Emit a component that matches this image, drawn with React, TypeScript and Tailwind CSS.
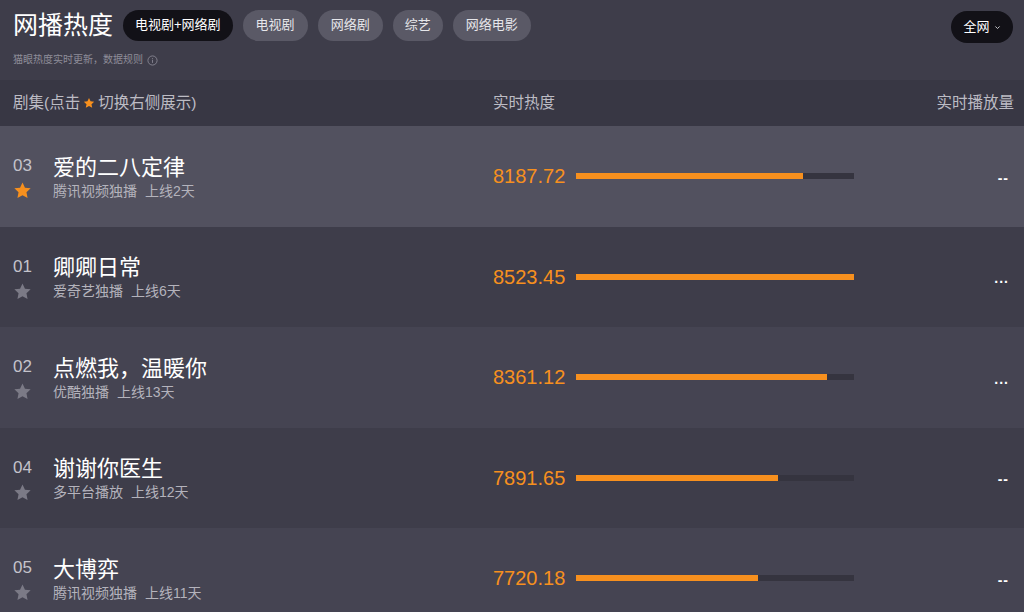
import React from "react";

const FONT = '"Liberation Sans", "Noto Sans CJK SC", sans-serif';

const rows = [
  { no: "03", title: "爱的二八定律", sub: "腾讯视频独播", days: "上线2天", heat: "8187.72", pct: 0.817, right: "--", starred: true, bg: "bg-[#52515f]" },
  { no: "01", title: "卿卿日常", sub: "爱奇艺独播", days: "上线6天", heat: "8523.45", pct: 1, right: "...", starred: false, bg: "bg-[#3e3d4a]" },
  { no: "02", title: "点燃我，温暖你", sub: "优酷独播", days: "上线13天", heat: "8361.12", pct: 0.903, right: "...", starred: false, bg: "bg-[#454452]" },
  { no: "04", title: "谢谢你医生", sub: "多平台播放", days: "上线12天", heat: "7891.65", pct: 0.727, right: "--", starred: false, bg: "bg-[#3e3d4a]" },
  { no: "05", title: "大博弈", sub: "腾讯视频独播", days: "上线11天", heat: "7720.18", pct: 0.655, right: "--", starred: false, bg: "bg-[#454452]" },
];

function Star({ className }: { className: string }) {
  return (
    <svg viewBox="0 0 24 24" className={className} fill="currentColor">
      <path d="M12 1.8l3.1 6.6 7.2.9-5.3 5 1.4 7.1L12 17.9l-6.4 3.5 1.4-7.1-5.3-5 7.2-.9z" />
    </svg>
  );
}

export default function App() {
  return (
    <div className="w-[1024px] h-[612px] overflow-hidden bg-[#3e3d4a]" style={{ fontFamily: FONT }}>
      {/* Top header */}
      <div className="h-[80px] px-[13px] pt-[8px] flex flex-col">
        <div className="flex items-center h-[34px]">
          <div className="text-[25px] leading-[34px] text-white mr-[10px]">网播热度</div>
          <div className="flex items-center gap-[10px]">
            <div className="h-[31px] px-[12px] rounded-full bg-[#121117] text-white text-[13px] flex items-center">电视剧+网络剧</div>
            <div className="h-[31px] px-[13px] rounded-full bg-[#5a5966] text-[#e6e6ea] text-[13px] flex items-center">电视剧</div>
            <div className="h-[31px] px-[13px] rounded-full bg-[#5a5966] text-[#e6e6ea] text-[13px] flex items-center">网络剧</div>
            <div className="h-[31px] px-[12px] rounded-full bg-[#5a5966] text-[#e6e6ea] text-[13px] flex items-center">综艺</div>
            <div className="h-[31px] px-[13px] rounded-full bg-[#5a5966] text-[#e6e6ea] text-[13px] flex items-center">网络电影</div>
          </div>
          <div className="ml-auto mt-[3px] h-[32px] w-[62px] rounded-full bg-[#121117] text-white text-[13px] flex items-center justify-center gap-[4px] -mr-[2px]">
            <span>全网</span>
            <svg viewBox="0 0 10 10" className="w-[7px] h-[7px] mt-[1px]" fill="none" stroke="#c8c8cc" strokeWidth="1.4">
              <path d="M2 3.5l3 3 3-3" />
            </svg>
          </div>
        </div>
        <div className="mt-[11px] flex items-center gap-[4px] text-[10px] leading-[14px] text-[#8e8d99]">
          <span>猫眼热度实时更新，数据规则</span>
          <svg viewBox="0 0 12 12" className="w-[11px] h-[11px]" fill="none" stroke="#8e8d99" strokeWidth="0.9">
            <circle cx="6" cy="6" r="5" />
            <path d="M6 5.2v3.4M6 3.3v0.9" />
          </svg>
        </div>
      </div>

      {/* Column header */}
      <div className="h-[46px] bg-[#383744] flex items-center px-[13px] text-[15.5px] text-[#bdbcc4]">
        <div className="w-[480px] flex items-center">
          <span>剧集(点击</span>
          <Star className="w-[12px] h-[12px] text-[#f7901e] mx-[3px]" />
          <span>切换右侧展示)</span>
        </div>
        <div>实时热度</div>
        <div className="ml-auto -mr-[3px]">实时播放量</div>
      </div>

      {/* Rows */}
      {rows.map((r) => (
        <div key={r.no} className={`h-[100.5px] ${r.bg} flex items-center px-[13px]`}>
          <div className="w-[480px] flex items-center pt-[3px]">
            <div className="w-[40px] flex flex-col">
              <div className="text-[17px] leading-[22px] text-[#c4c3cb]">{r.no}</div>
              <Star className={`w-[19px] h-[19px] mt-[4px] ${r.starred ? "text-[#f7901e]" : "text-[#7b7a86]"}`} />
            </div>
            <div className="flex flex-col">
              <div className="text-[22px] leading-[26px] text-white">{r.title}</div>
              <div className="text-[14px] leading-[20px] text-[#b4b3bc] flex gap-[8px]">
                <span>{r.sub}</span>
                <span>{r.days}</span>
              </div>
            </div>
          </div>
          <div className="flex items-center">
            <div className="w-[83px] text-[20px] text-[#f7901e]">{r.heat}</div>
            <div className="w-[278px] h-[6px] bg-[#35343f]">
              <div className="h-full bg-[#f7901e]" style={{ width: `${r.pct * 100}%` }} />
            </div>
          </div>
          <div className="ml-auto mr-[2px] mt-[4px] text-[14px] text-white font-bold tracking-[1px]">{r.right}</div>
        </div>
      ))}
    </div>
  );
}
